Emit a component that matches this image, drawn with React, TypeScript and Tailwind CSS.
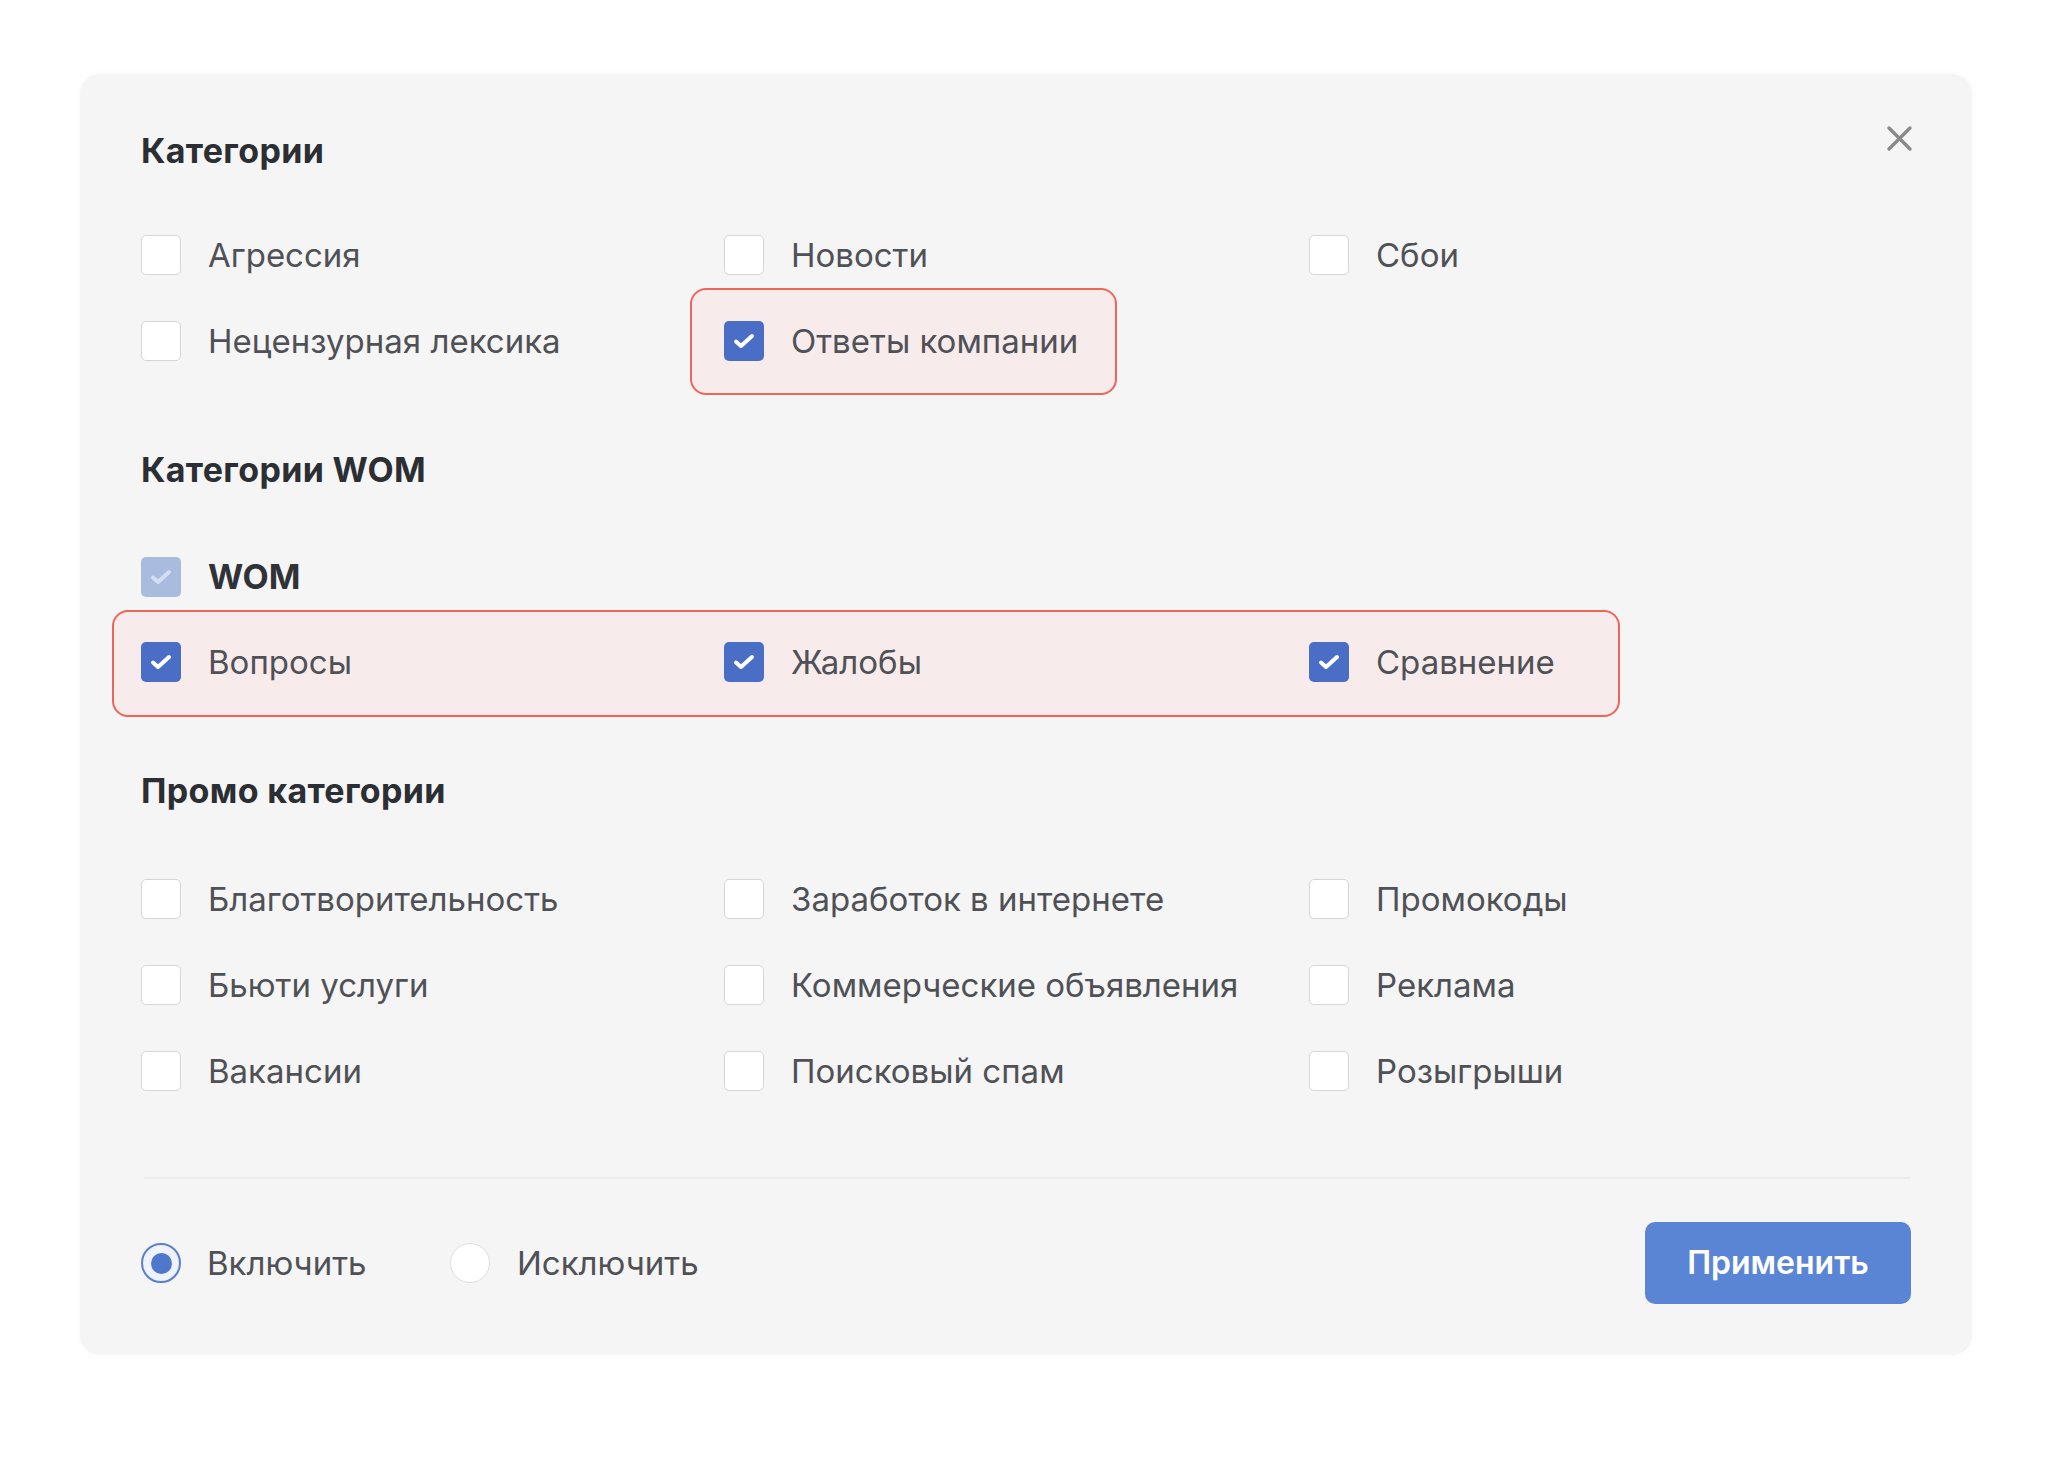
import React from "react";

type Item = { label: string; checked?: boolean };

function Check({ checked, disabled }: { checked?: boolean; disabled?: boolean }) {
  if (checked) {
    return (
      <span
        className={`flex h-[40px] w-[40px] shrink-0 items-center justify-center rounded-[5px] ${
          disabled ? "bg-[#a9bce0]" : "bg-[#4a6dc6]"
        }`}
      >
        <svg width="22" height="16" viewBox="0 0 22 16" fill="none">
          <path
            d="M3 8.5l5 4.5L19 3"
            stroke={disabled ? "#d3def2" : "#ffffff"}
            strokeWidth="4"
            strokeLinecap="round"
            strokeLinejoin="round"
          />
        </svg>
      </span>
    );
  }
  return <span className="h-[40px] w-[40px] shrink-0 rounded-[5px] border-[1.5px] border-[#d6d6d6] bg-white" />;
}

function Option({ item }: { item: Item }) {
  return (
    <div className="flex h-[40px] items-center gap-[27px]">
      <Check checked={item.checked} />
      <span className="whitespace-nowrap text-[33px] leading-none text-[#4f5156]">{item.label}</span>
    </div>
  );
}

function Title({ children }: { children: React.ReactNode }) {
  return (
    <h2 className="h-[40px] text-[34px] font-bold leading-[40px] tracking-[0.01em] text-[#2b2e33]">{children}</h2>
  );
}

const cols = "grid grid-cols-[583px_585px_1fr] gap-y-[46px]";

export default function App() {
  const promo: Item[] = [
    { label: "Благотворительность" },
    { label: "Заработок в интернете" },
    { label: "Промокоды" },
    { label: "Бьюти услуги" },
    { label: "Коммерческие объявления" },
    { label: "Реклама" },
    { label: "Вакансии" },
    { label: "Поисковый спам" },
    { label: "Розыгрыши" },
  ];

  return (
    <div className="min-h-screen bg-white font-['Inter','Noto_Sans',sans-serif]">
      <div className="ml-[80px] pt-[74px]">
        <div className="w-[1892px] rounded-[20px] bg-[#f5f5f5] px-[61px] pb-[51px] pt-[57px] shadow-[0_0_6px_rgba(0,0,0,0.03)]">
          {/* Категории */}
          <div className="flex items-start justify-between">
            <Title>Категории</Title>
            <button className="-mr-[2px] -mt-[6px] text-[#8a8a8a]">
              <svg width="27" height="27" viewBox="0 0 27 27" fill="none">
                <path d="M3 3l21 21M24 3L3 24" stroke="currentColor" strokeWidth="3.4" strokeLinecap="round" />
              </svg>
            </button>
          </div>

          <div className={`${cols} mt-[64px]`}>
            <Option item={{ label: "Агрессия" }} />
            <Option item={{ label: "Новости" }} />
            <Option item={{ label: "Сбои" }} />
            <Option item={{ label: "Нецензурная лексика" }} />
            <div className="-mb-[34px] -ml-[34px] -mt-[33px] w-fit rounded-[16px] border-2 border-[#f0655a] bg-[#f7ebeb] pb-[32px] pl-[32px] pr-[37px] pt-[31px]">
              <Option item={{ label: "Ответы компании", checked: true }} />
            </div>
            <div />
          </div>

          {/* Категории WOM */}
          <div className="mt-[89px]">
            <Title>Категории WOM</Title>
          </div>

          <div className="mt-[67px] flex h-[40px] items-center gap-[27px]">
            <Check checked disabled />
            <span className="text-[34px] font-bold leading-none text-[#2f3237]">WOM</span>
          </div>

          <div className="-mb-[35px] -ml-[29px] mt-[13px] w-[1508px] rounded-[16px] border-2 border-[#f0655a] bg-[#f7ebeb] pb-[33px] pl-[27px] pt-[30px]">
            <div className="grid grid-cols-[583px_585px_1fr]">
              <Option item={{ label: "Вопросы", checked: true }} />
              <Option item={{ label: "Жалобы", checked: true }} />
              <Option item={{ label: "Сравнение", checked: true }} />
            </div>
          </div>

          {/* Промо категории */}
          <div className="mt-[89px]">
            <Title>Промо категории</Title>
          </div>

          <div className={`${cols} mt-[68px]`}>
            {promo.map((p) => (
              <Option key={p.label} item={p} />
            ))}
          </div>

          <div className="ml-[3px] mt-[86px] h-[2px] bg-[#ebebeb]" />

          <div className="mt-[43px] flex items-center justify-between">
            <div className="flex items-center">
              <label className="flex w-[309px] items-center gap-[26px]">
                <span className="flex h-[40px] w-[40px] items-center justify-center rounded-full border-2 border-[#5b7fcf] bg-[#eef3fb]">
                  <span className="h-[21px] w-[21px] rounded-full bg-[#4f78cc]" />
                </span>
                <span className="text-[33px] leading-none text-[#4f5156]">Включить</span>
              </label>
              <label className="flex items-center gap-[27px]">
                <span className="h-[40px] w-[40px] rounded-full border-[1.5px] border-[#dedede] bg-white" />
                <span className="text-[33px] leading-none text-[#4f5156]">Исключить</span>
              </label>
            </div>
            <button className="h-[82px] w-[266px] rounded-[10px] bg-[#5a85d4] text-[32px] font-semibold text-white">
              Применить
            </button>
          </div>
        </div>
      </div>
    </div>
  );
}
